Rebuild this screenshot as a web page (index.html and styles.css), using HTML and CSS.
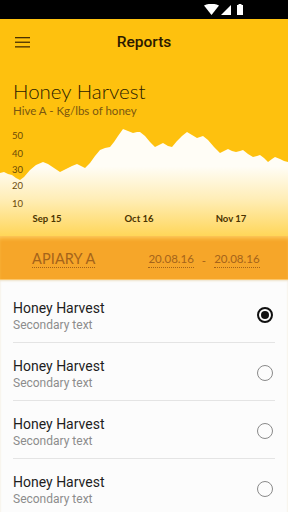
FILE: index.html
```html
<!DOCTYPE html>
<html>
<head>
<meta charset="utf-8">
<link rel="stylesheet" href="styles.css">
</head>
<body>
<div class="screen">
  <div class="statusbar">
    <svg class="sb-icons" width="44" height="12" viewBox="0 0 44 12">
      <path d="M0 1.5 Q7.5 -2 15 1.5 L7.5 11 Z" fill="#fff"/>
      <path d="M27 1 L27 11 L17 11 Z" fill="#fff"/>
      <rect x="33" y="1" width="6" height="10" fill="#fff"/>
      <rect x="34.5" y="0" width="3" height="1" fill="#fff"/>
    </svg>
  </div>
  <header class="toolbar">
    <svg class="menu" width="15" height="11" viewBox="0 0 15 11">
      <rect x="0" y="0" width="15" height="1.3" fill="#4a3000"/>
      <rect x="0" y="4.6" width="15" height="1.3" fill="#4a3000"/>
      <rect x="0" y="9.2" width="15" height="1.3" fill="#4a3000"/>
    </svg>
    <h1 class="title">Reports</h1>
  </header>
  <section class="chart">
    <svg class="chart-svg" viewBox="0 0 288 172" width="288" height="172">
      <defs>
        <linearGradient id="fillg" x1="0" y1="0" x2="0" y2="1">
          <stop offset="0.35" stop-color="#fffdf6"/>
          <stop offset="0.65" stop-color="#ffeeb8"/>
          <stop offset="1" stop-color="#ffd659"/>
        </linearGradient>
      </defs>
      <path fill="url(#fillg)" d="M0 109 L4 108 L8 110 L12 111 L16 114 L20 116 L24 113 L30 106 L36 101 L43 98 L48 100 L54 104 L60 108 L66 105 L72 102 L77 100 L81 102 L85 104 L90 99 L95 92 L100 86 L105 84 L110 83 L114 78 L118 72 L123 65 L128 67 L133 69 L137 68 L140 68 L145 72 L150 78 L155 83 L159 81 L163 79 L168 82 L172 83 L177 77 L182 72 L187 68 L192 71 L197 74 L203 72 L208 76 L214 83 L220 89 L224 87 L228 85 L232 87 L236 88 L240 87 L243 86 L248 90 L253 93 L257 92 L260 91 L264 94 L268 98 L272 95 L275 93 L280 95 L284 97 L288 98 L288 172 L0 172 Z"/>
      <g class="ylab">
        <text x="12" y="75">50</text>
        <text x="12" y="93">40</text>
        <text x="12" y="109">30</text>
        <text x="12" y="125">20</text>
        <text x="12" y="143">10</text>
      </g>
      <g class="xlab">
        <text x="47" y="158">Sep 15</text>
        <text x="139" y="158">Oct 16</text>
        <text x="231" y="158">Nov 17</text>
      </g>
    </svg>
    <div class="chart-head">
      <div class="chart-title">Honey Harvest</div>
      <div class="chart-sub">Hive A - Kg/lbs of honey</div>
    </div>
  </section>
  <section class="band">
    <span class="apiary">APIARY A</span>
    <div class="dates">
      <span class="date">20.08.16</span>
      <span class="dash">-</span>
      <span class="date">20.08.16</span>
    </div>
  </section>
  <ul class="list">
    <li class="row">
      <div class="texts"><div class="primary">Honey Harvest</div><div class="secondary">Secondary text</div></div>
      <span class="radio checked"></span>
    </li>
    <li class="row">
      <div class="texts"><div class="primary">Honey Harvest</div><div class="secondary">Secondary text</div></div>
      <span class="radio"></span>
    </li>
    <li class="row">
      <div class="texts"><div class="primary">Honey Harvest</div><div class="secondary">Secondary text</div></div>
      <span class="radio"></span>
    </li>
    <li class="row">
      <div class="texts"><div class="primary">Honey Harvest</div><div class="secondary">Secondary text</div></div>
      <span class="radio"></span>
    </li>
  </ul>
</div>
</body>
</html>
```
FILE: styles.css
```css
* { box-sizing: border-box; }
html, body { margin: 0; padding: 0; }
body {
  width: 288px;
  height: 512px;
  overflow: hidden;
  background: #fafafa;
  font-family: Roboto, "Noto Sans", sans-serif;
}
.screen { width: 288px; height: 512px; overflow: hidden; }
.statusbar {
  height: 19px;
  background: #000;
  display: flex;
  justify-content: flex-end;
  align-items: center;
  padding-right: 40px;
}
.toolbar {
  height: 45px;
  background: #fec10e;
  display: flex;
  align-items: center;
  position: relative;
  padding-left: 15px;
}
.menu { display: block; margin-top: 1px; }
.title {
  position: absolute;
  left: 0; right: 0;
  margin: 0;
  text-align: center;
  font-size: 15.5px;
  font-weight: 500;
  color: #2b1a00;
  pointer-events: none;
}
.chart {
  height: 172px;
  background: #fec10e;
  position: relative;
}
.chart-svg { position: absolute; left: 0; top: 0; display: block; }
.chart-head {
  position: relative;
  padding: 15px 0 0 13px;
  font-family: Lato, sans-serif;
}
.chart-title {
  font-size: 20.5px;
  line-height: 24px;
  font-weight: 300;
  color: #2a1b00;
}
.chart-sub {
  font-size: 11.5px;
  line-height: 13px;
  font-weight: 400;
  color: #7a5710;
  margin-top: 1px;
}
.ylab text {
  font-family: Lato, sans-serif;
  font-size: 9.5px;
  fill: #6b4a08;
}
.xlab text {
  font-family: Lato, sans-serif;
  font-size: 9.5px;
  font-weight: 700;
  fill: #4a3300;
  text-anchor: middle;
}
.band {
  height: 44px;
  background: #f6a629;
  box-shadow: inset 0 4px 4px -2px rgba(255, 214, 110, 0.8), inset 0 -1px 0 rgba(255,220,150,0.6);
  display: flex;
  align-items: center;
  padding: 4px 0 0 32px;
  font-family: Lato, sans-serif;
  color: #a5641a;
}
.apiary {
  font-size: 14.5px;
  font-weight: 400;
  letter-spacing: 0.1px;
  border-bottom: 1px dotted #a5641a;
  line-height: 14px;
  padding-bottom: 1px;
}
.dates {
  display: flex;
  align-items: center;
  margin-left: 53px;
  font-size: 11.5px;
  font-weight: 400;
}
.date {
  border-bottom: 1px dotted #a5641a;
  line-height: 12px;
  padding-bottom: 2px;
}
.dash { margin: 0 8px; }
.list {
  list-style: none;
  margin: 0;
  padding: 5px 0 0 0;
  background: #fcfcfc;
  box-shadow: inset 0 1px 2px rgba(200,150,60,0.25);
}
.row {
  height: 58px;
  margin: 0 13px;
  padding: 14px 2px 0 0;
  border-bottom: 1px solid #e4e4e4;
  display: flex;
  align-items: flex-start;
  justify-content: space-between;
}
.primary {
  font-size: 14px;
  line-height: 18px;
  color: #1e1e1e;
}
.secondary {
  font-size: 12px;
  line-height: 16px;
  color: #8c8c8c;
}
.radio {
  width: 16px;
  height: 16px;
  border-radius: 50%;
  border: 1.6px solid #8a8a8a;
  margin-top: 8px;
  display: flex;
  align-items: center;
  justify-content: center;
}
.radio.checked { border: 2px solid #111; }
.radio.checked::after {
  content: "";
  width: 8px;
  height: 8px;
  border-radius: 50%;
  background: #111;
}
```
